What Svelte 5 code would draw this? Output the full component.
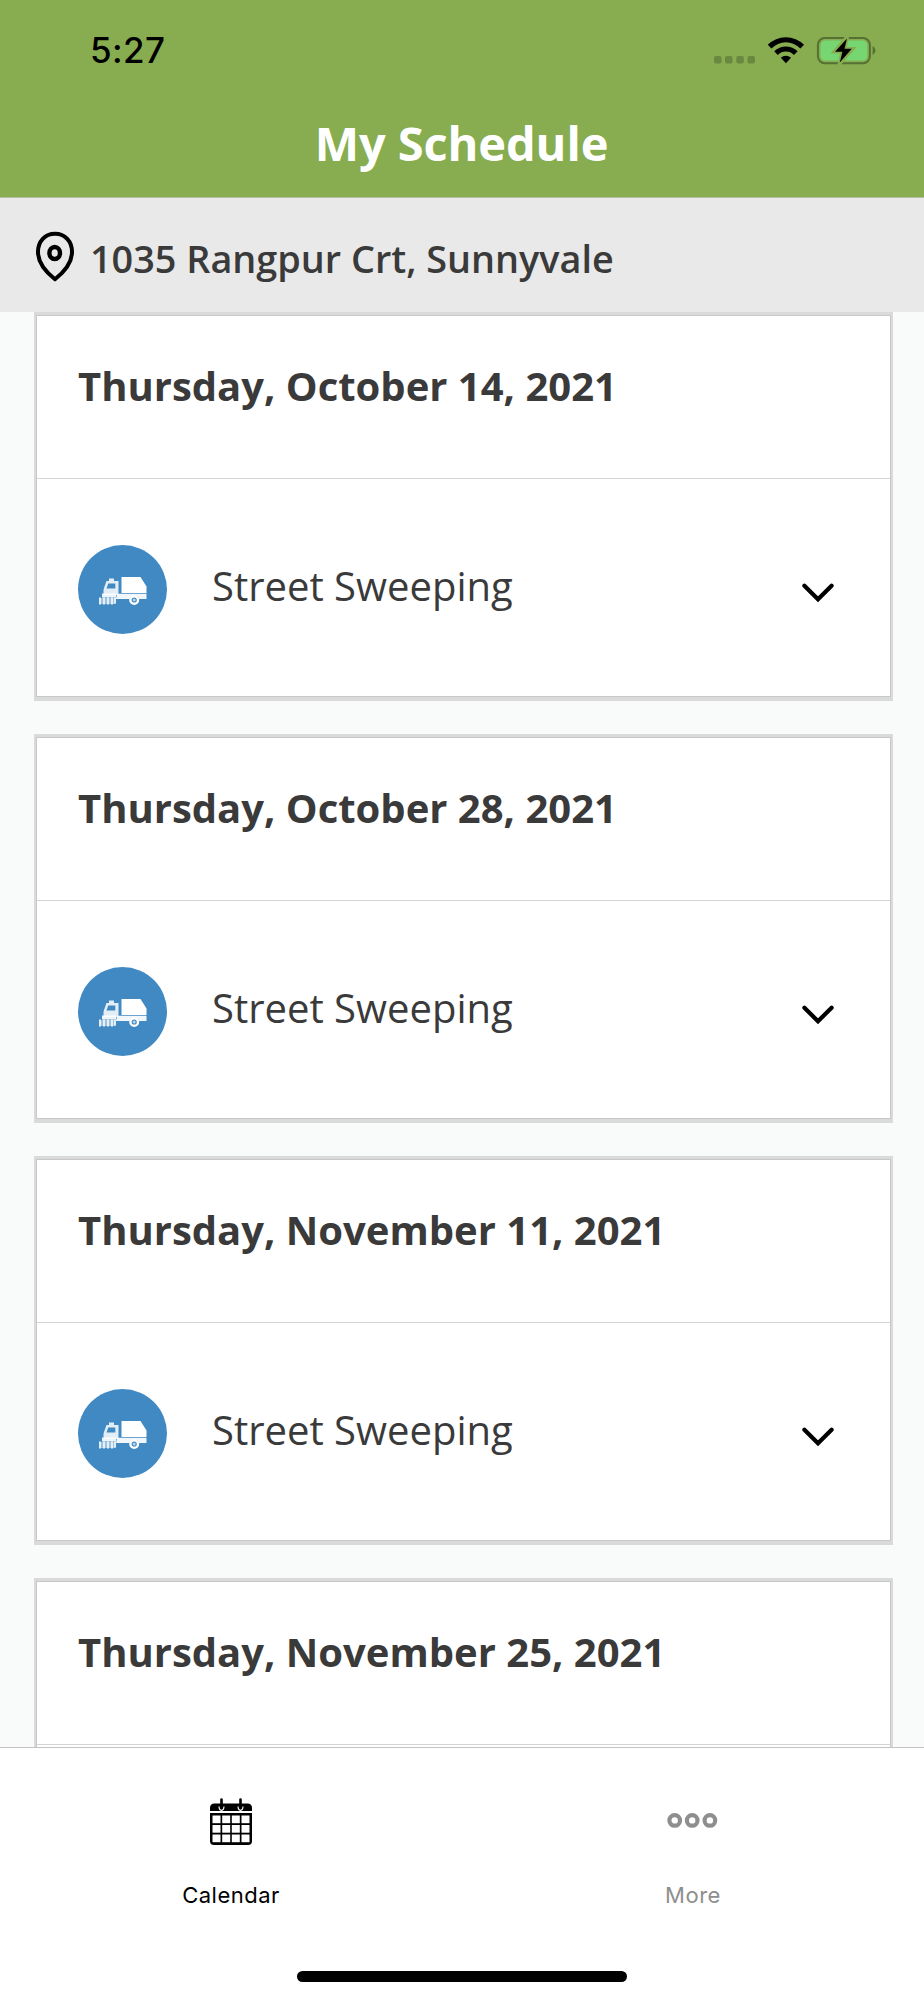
<script lang="ts">
  interface Pickup {
    date: string,
    service?: string
  }

  const address = '1035 Rangpur Crt, Sunnyvale';

  const pickups: Array<Pickup> = [
    { date: 'Thursday, October 14, 2021', service: 'Street Sweeping' },
    { date: 'Thursday, October 28, 2021', service: 'Street Sweeping' },
    { date: 'Thursday, November 11, 2021', service: 'Street Sweeping' },
    { date: 'Thursday, November 25, 2021' }
  ];
</script>

<div class="screen">
  <header>
    <div class="status">
      <span class="time">5:27</span>
      <svg class="status-icons" width="164" height="30" viewBox="0 0 164 30">
        <g fill="#698840">
          <rect x="0" y="21" width="7.5" height="7.5" rx="2" />
          <rect x="11" y="21" width="7.5" height="7.5" rx="2" />
          <rect x="22.3" y="21" width="7.5" height="7.5" rx="2" />
          <rect x="33.5" y="21" width="7.5" height="7.5" rx="2" />
        </g>
        <path d="M53.8 9.8 A25.5 25.5 0 0 1 90 9.8 L86.4 13.4 A20.4 20.4 0 0 0 57.4 13.4 Z" />
        <path d="M60.2 16.3 A16.5 16.5 0 0 1 83.6 16.3 L80 19.9 A11.4 11.4 0 0 0 63.8 19.9 Z" />
        <path d="M66.8 22.8 A7.4 7.4 0 0 1 77 22.8 L71.9 28.2 Z" />
        <rect x="103.9" y="2.9" width="52" height="25.4" rx="7" fill="none" stroke="#557033" stroke-width="2" />
        <rect x="106.6" y="5.6" width="46.6" height="20" rx="4.5" fill="#76d672" />
        <path d="M158.6 11 a5 5 0 0 1 0 9 z" fill="#557033" />
        <path class="bolt-edge" d="M133.4 1.5 L120.2 16.9 H127.9 L125.4 29 L138.8 13.6 H130.9 Z" />
        <path d="M133 3.4 L121 16.8 H128.4 L125.8 27.4 L137.8 13.8 H130.5 Z" />
      </svg>
    </div>
    <h1>My Schedule</h1>
  </header>

  <div class="address">
    <svg width="40" height="52" viewBox="0 0 40 52" fill="none" stroke="#000">
      <path d="M20 2.8 C10 2.8 3 10.4 3 21 C3 32 11.5 41.5 20 48.3 C28.5 41.5 37 32 37 21 C37 10.4 30 2.8 20 2.8 Z" stroke-width="4" stroke-linejoin="round" />
      <ellipse cx="19.7" cy="22" rx="5.3" ry="6" stroke-width="4.4" />
    </svg>
    <span>{address}</span>
  </div>

  <main>
    {#each pickups as p}
      <section class="card">
        <h2>{p.date}</h2>
        {#if p.service}
          <div class="row">
            <div class="badge">
              <svg width="50" height="30" viewBox="0 0 50 30">
                <path d="M6 13 L8.5 6 H11 V3.5 H16 V6 H20.5 V20 H5.5 V15 Z" fill="#fff" opacity="0.85" />
                <path d="M8.5 13.6 L10.3 8.4 H17.3 V13.6 Z" fill="#4189c3" />
                <path d="M23.5 2 H42.5 L48.5 11.5 V18 H23.5 Z" fill="#fff" />
                <path d="M19 18.8 H48.5 V24 H41 A5 5 0 0 0 31.5 24 H18 Z" fill="#fff" opacity="0.92" />
                <rect x="4" y="18.5" width="14" height="4" fill="#fff" opacity="0.9" />
                <path d="M1 23 H17.5 V29 H1 Z" fill="#9cc2e0" />
                <path d="M2 22.5 V29.5 M6 22.5 V29.5 M10 22.5 V29.5 M14 22.5 V29.5 M17 22.5 V28.5" stroke="#e4eff7" stroke-width="2" />
                <circle cx="36.2" cy="25" r="3.8" fill="#4189c3" stroke="#fff" stroke-width="2.4" />
                <circle cx="36.2" cy="25" r="1.5" fill="#b9d5ea" />
              </svg>
            </div>
            <span class="service">{p.service}</span>
            <svg class="chevron" width="32" height="20" viewBox="0 0 32 20">
              <path d="M2.4 2.8 L16 16.2 L29.6 2.8" fill="none" stroke="#000" stroke-width="4.2" stroke-linecap="round" />
            </svg>
          </div>
        {/if}
      </section>
    {/each}
  </main>

  <nav>
    <div class="tabs">
      <div class="tab active">
        <svg width="42" height="48" viewBox="0 0 42 48">
          <path d="M0 13 V10 Q0 5.5 4.5 5.5 H37.5 Q42 5.5 42 10 V13 Z" />
          <path d="M9.2 8.5 a2.4 3 0 1 0 4.6 0 M28.2 8.5 a2.4 3 0 1 0 4.6 0" fill="none" stroke="#fff" stroke-width="1.2" />
          <path d="M11.5 1.5 V9 M30.5 1.5 V9" stroke="#000" stroke-width="2.6" stroke-linecap="round" />
          <path d="M0 15 H42 V43 Q42 47 38 47 H4 Q0 47 0 43 Z" />
          <g fill="#fff">
            {#each [17.5, 27, 36.5] as y}
              <rect x="2.5" {y} width="8" height="7.7" />
              <rect x="12.2" {y} width="8" height="7.7" />
              <rect x="21.8" {y} width="8" height="7.7" />
              <rect x="31.5" {y} width="8" height="7.7" />
            {/each}
          </g>
        </svg>
        <span>Calendar</span>
      </div>
      <div class="tab">
        <svg width="52" height="48" viewBox="0 0 52 48" fill="none" stroke="#8e8e8e" stroke-width="4.2">
          <circle cx="7.7" cy="22.4" r="5.3" />
          <circle cx="25.2" cy="22.4" r="5.3" />
          <circle cx="42.9" cy="22.4" r="5.3" />
        </svg>
        <span>More</span>
      </div>
    </div>
    <div class="home"></div>
  </nav>
</div>

<style>
  :global(body) {
    margin: 0;
  }

  .screen {
    display: flex;
    flex-direction: column;
    width: 924px;
    height: 2000px;
    overflow: hidden;
    background-color: #f9fbfa;
    color: #3a3a3a;
    font-family: 'Open Sans', sans-serif;
  }

  header {
    flex: none;
    box-sizing: border-box;
    height: 198px;
    background-color: #87ad50;
    border-bottom: 1px solid #b4bda6;
  }

  .status {
    display: flex;
    justify-content: space-between;
    height: 65px;
    padding: 35px 46px 0 90px;
    box-sizing: border-box;
  }

  .time {
    color: #000;
    font-family: Inter, sans-serif;
    font-size: 35px;
    font-weight: 500;
    line-height: 31px;
    letter-spacing: 0.4px;
  }

  .status-icons {
    display: block;
  }

  .bolt-edge {
    fill: #87ad50;
    stroke: #87ad50;
    stroke-width: 3.4;
  }

  h1 {
    margin: 36px 1px 0 0;
    color: #fff;
    font-size: 47px;
    font-weight: 700;
    line-height: 84px;
    letter-spacing: -0.1px;
    text-align: center;
  }

  .address {
    flex: none;
    display: flex;
    box-sizing: border-box;
    height: 114px;
    padding: 33px 35px 0;
    background-color: #e9e9e9;
    font-size: 37.8px;
    font-weight: 600;
    line-height: 56px;
  }

  .address span {
    margin-left: 15px;
  }

  main {
    flex: 1;
    min-height: 0;
    overflow: hidden;
    padding: 0 31px 0 34px;
  }

  .card {
    box-sizing: border-box;
    height: 389px;
    margin-bottom: 33px;
    background-color: #fff;
    border: 2px solid #dadada;
    border-top-width: 3px;
    border-bottom-width: 4px;
    box-shadow: inset 0 0 0 1px #c8c8c8;
  }

  h2 {
    box-sizing: border-box;
    height: 164px;
    margin: 0 1px;
    padding: 43px 41px 0;
    font-size: 40px;
    font-weight: 700;
    line-height: 56px;
    border-bottom: 1px solid #d4d4d4;
  }

  .row {
    display: flex;
    align-items: flex-start;
    padding: 66px 57px 0 42px;
  }

  .badge {
    display: flex;
    align-items: center;
    justify-content: center;
    width: 89px;
    height: 89px;
    border-radius: 50%;
    background-color: #4189c3;
  }

  .service {
    flex: 1;
    margin: 14px 0 0 45px;
    font-size: 40px;
    line-height: 54px;
  }

  .chevron {
    margin-top: 38px;
  }

  nav {
    flex: none;
    box-sizing: border-box;
    height: 253px;
    border-top: 1px solid #c3c3c3;
    background-color: #fff;
  }

  .tabs {
    display: flex;
    height: 223px;
  }

  .tab {
    flex: 1;
    display: flex;
    flex-direction: column;
    align-items: center;
    padding-top: 50px;
    color: #8e8e8e;
    font-family: Inter, sans-serif;
    font-size: 22px;
    font-weight: 400;
    line-height: 30px;
    letter-spacing: 0.5px;
  }

  .tab span {
    margin-top: 34px;
  }

  .active {
    color: #000;
  }

  .home {
    width: 330px;
    height: 11px;
    margin: 0 auto;
    border-radius: 6px;
    background-color: #000;
  }
</style>
